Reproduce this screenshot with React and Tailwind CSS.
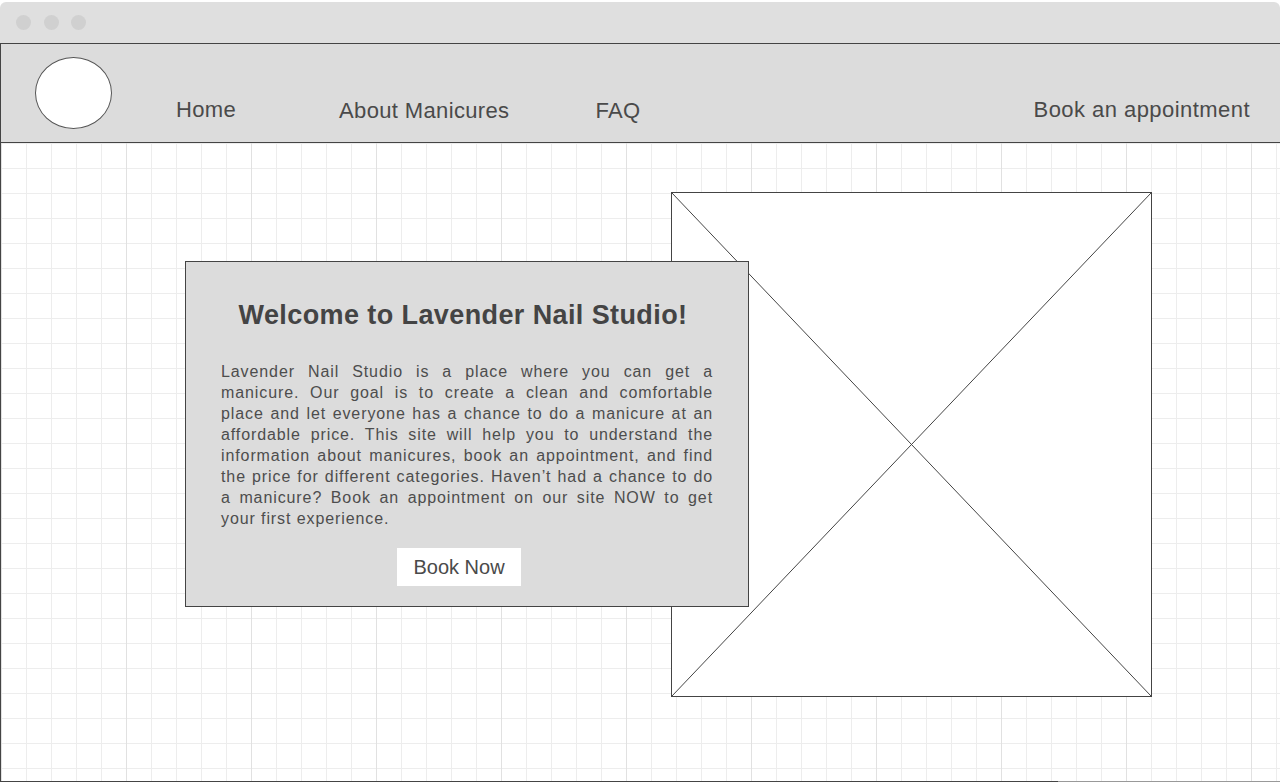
import React from "react";

const font = { fontFamily: '"Liberation Sans", Arial, sans-serif' };

const lines = [
  "Lavender Nail Studio is a place where you can get a",
  "manicure. Our goal is to create a clean and comfortable",
  "place and let everyone has a chance to do a manicure at an",
  "affordable price. This site will help you to understand the",
  "information about manicures, book an appointment, and find",
  "the price for different categories. Haven’t had a chance to do",
  "a manicure? Book an appointment on our site NOW to get",
];

export default function App() {
  return (
    <div
      className="w-[1280px] h-[782px] overflow-hidden bg-white flex flex-col text-[#4a4a4a]"
      style={font}
    >
      {/* browser chrome */}
      <div className="mt-[2px] h-[41px] shrink-0 bg-[#dfdfdf] rounded-t-[6px] flex items-center">
        <div className="ml-[16px] w-[15px] h-[15px] rounded-full bg-[#d0d0d0]" />
        <div className="ml-[13px] w-[15px] h-[15px] rounded-full bg-[#d0d0d0]" />
        <div className="ml-[12px] w-[15px] h-[15px] rounded-full bg-[#d0d0d0]" />
      </div>

      {/* header */}
      <header className="h-[100px] shrink-0 bg-[#dcdcdc] border-y border-l border-[#444] flex items-start">
        <div className="ml-[34px] mt-[13px] w-[77px] h-[72px] rounded-[50%] bg-white border border-[#555]" />
        <a className="ml-[64px] mt-[53px] text-[22px] leading-[25px] tracking-[0.35px]">Home</a>
        <a className="ml-[103px] mt-[54px] text-[22px] leading-[25px] tracking-[0.35px]">About Manicures</a>
        <a className="ml-[86px] mt-[54px] text-[22px] leading-[25px] tracking-[0.35px]">FAQ</a>
        <a className="ml-auto mr-[30px] mt-[53px] text-[22px] leading-[25px] tracking-[0.45px]">
          Book an appointment
        </a>
      </header>

      {/* main grid canvas */}
      <main
        className="flex-1 border-l border-[#444] flex items-start bg-white"
        style={{
          backgroundImage:
            "linear-gradient(to right, #e1e1e1 1px, transparent 1px), linear-gradient(to right, #ededed 1px, transparent 1px), linear-gradient(to bottom, #ededed 1px, transparent 1px)",
          backgroundSize: "125px 125px, 25px 25px, 25px 25px",
          backgroundPosition: "0 0, 0 0, 0 0",
        }}
      >
        <section className="relative z-10 ml-[184px] mt-[118px] w-[564px] h-[346px] shrink-0 bg-[#dcdcdc] border border-[#444] flex flex-col px-[35px] pt-[38px]">
          <h1 className="text-center font-bold text-[27px] leading-[31px] tracking-[0.4px] text-[#444] -ml-[8px]">
            Welcome to Lavender Nail Studio!
          </h1>
          <p className="mt-[30px] text-[16px] leading-[21px] tracking-[0.9px] text-[#4d4d4d]">
            {lines.map((l, i) => (
              <span key={i} className="block text-justify [text-align-last:justify]">
                {l}
              </span>
            ))}
            <span className="block">your first experience.</span>
          </p>
          <button className="mt-[19px] ml-[176px] self-start w-[124px] h-[38px] bg-white flex items-center justify-center text-[20px] text-[#4a4a4a]">
            Book Now
          </button>
        </section>

        <div className="relative ml-[-78px] mt-[49px] w-[481px] h-[505px] shrink-0 bg-white border border-[#444]">
          <svg
            className="absolute inset-0 w-full h-full"
            viewBox="0 0 100 100"
            preserveAspectRatio="none"
          >
            <line x1="0" y1="0" x2="100" y2="100" stroke="#444" strokeWidth="1" vectorEffect="non-scaling-stroke" />
            <line x1="100" y1="0" x2="0" y2="100" stroke="#444" strokeWidth="1" vectorEffect="non-scaling-stroke" />
          </svg>
        </div>
      </main>

      {/* bottom edge */}
      <div className="h-px shrink-0 flex">
        <div className="w-[1058px] bg-[#444]" />
        <div className="flex-1 bg-[#999]" />
      </div>
    </div>
  );
}
